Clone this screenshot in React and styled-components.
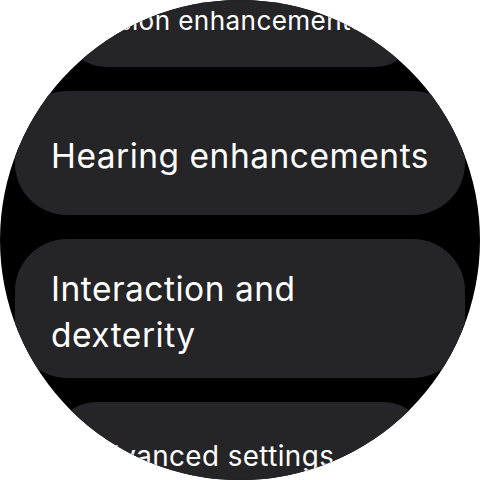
import React from 'react';
import styled, { createGlobalStyle } from 'styled-components';

const GlobalStyle = createGlobalStyle`
    html, body {
        margin: 0;
        padding: 0;
        background: #ffffff;
    }
    #root {
        width: 480px;
        height: 480px;
    }
`;

const Screen = styled.div`
    width: 480px;
    height: 480px;
    border-radius: 50%;
    background: #000000;
    overflow: hidden;
    font-family: Inter, Roboto, "Noto Sans", sans-serif;
`;

const List = styled.div`
    display: flex;
    flex-direction: column;
    align-items: center;
    gap: 24px;
    margin-top: ${p => -p.scrollOffset}px;
`;

// items near the top and bottom edge shrink, like a scaling list
const Chip = styled.div`
    box-sizing: border-box;
    flex-shrink: 0;
    display: flex;
    align-items: center;
    width: ${p => 450 * p.scale}px;
    min-height: ${p => 124 * p.scale}px;
    padding: ${p => 27 * p.scale}px ${p => 36 * p.scale}px ${p => 20 * p.scale}px;
    border-radius: ${p => 52 * p.scale}px;
    background: #252527;
`;

const Label = styled.span`
    color: #ffffff;
    font-size: ${p => 33.5 * p.scale}px;
    line-height: ${p => 46 * p.scale}px;
    letter-spacing: ${p => 0.5 * p.scale}px;
    font-weight: 400;
    white-space: nowrap;
`;

const items = [
    { id: 'vision', lines: ['Vision enhancements'], scale: 0.78 },
    { id: 'hearing', lines: ['Hearing enhancements'], scale: 1 },
    { id: 'interaction', lines: ['Interaction and', 'dexterity'], scale: 1 },
    { id: 'advanced', lines: ['Advanced settings'], scale: 0.83 },
];

function App() {
    return (
        <>
            <GlobalStyle />
            <Screen>
                <List scrollOffset={30}>
                    {items.map(({ id, lines, scale }) => (
                        <Chip key={id} scale={scale}>
                            <Label scale={scale}>
                                {lines.map((line, i) => (
                                    <React.Fragment key={i}>
                                        {i > 0 && <br />}
                                        {line}
                                    </React.Fragment>
                                ))}
                            </Label>
                        </Chip>
                    ))}
                </List>
            </Screen>
        </>
    );
}

export default App;
